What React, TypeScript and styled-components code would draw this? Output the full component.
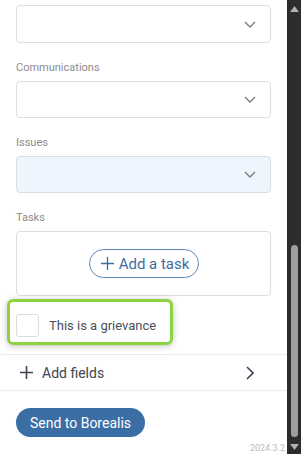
import React from "react";
import styled, { createGlobalStyle } from "styled-components";

const Global = createGlobalStyle`
  html, body { margin: 0; padding: 0; background: #fff; }
  body { font-family: Roboto, "Noto Sans", sans-serif; overflow: hidden; }
  * { box-sizing: border-box; }
`;

const Frame = styled.div`
  display: flex;
  width: 301px;
  height: 454px;
  overflow: hidden;
`;

const Content = styled.div`
  width: 287px;
  height: 454px;
  display: flex;
  flex-direction: column;
  position: relative;
`;

const Form = styled.div`
  display: flex;
  flex-direction: column;
  padding: 5px 16px 0 16px;
`;

const Field = styled.div<{ $first?: boolean }>`
  display: flex;
  flex-direction: column;
  margin-top: ${(p) => (p.$first ? "0" : "18px")};
`;

const Label = styled.div`
  font-size: 11px;
  line-height: 14px;
  color: #8c8c8c;
  margin-bottom: 6px;
`;

const Select = styled.div<{ $active?: boolean; $tall?: boolean }>`
  height: ${(p) => (p.$tall ? "38px" : "37px")};
  border: 1px solid #dedede;
  border-radius: 4px;
  background: ${(p) => (p.$active ? "#eef5fe" : "#fff")};
  display: flex;
  align-items: center;
  justify-content: flex-end;
  padding-right: 14px;
`;

const TaskBox = styled.div`
  height: 65px;
  border: 1px solid #dedede;
  border-radius: 4px;
  display: flex;
  align-items: center;
  justify-content: center;
  padding-left: 1px;
`;

const PillOutline = styled.button`
  height: 29px;
  width: 110px;
  border: 1px solid #5b86b4;
  border-radius: 15px;
  background: #fff;
  color: #3d6e9f;
  font-family: Roboto, sans-serif;
  font-size: 15px;
  display: flex;
  align-items: center;
  justify-content: center;
  gap: 5px;
  padding: 0 0 0 2px;
`;

const Highlight = styled.div`
  margin: 3px 0 0 7px;
  width: 166px;
  height: 46px;
  border: 3px solid #8dd241;
  border-radius: 6px;
  box-shadow: 0 1px 6px rgba(0, 0, 0, 0.25);
  display: flex;
  align-items: flex-start;
  padding: 12px 0 0 6px;
  gap: 10px;
`;

const Check = styled.div`
  width: 23px;
  height: 23px;
  border: 1px solid #dcdcdc;
  border-radius: 3px;
  background: #fff;
`;

const CheckText = styled.span`
  font-size: 13px;
  line-height: 23px;
  color: #4a4f5c;
`;

const AddRow = styled.div`
  margin-top: 9px;
  height: 37px;
  border-top: 1px solid #ececec;
  border-bottom: 1px solid #ececec;
  display: flex;
  align-items: center;
  padding: 0 33px 0 20px;
  gap: 9px;
`;

const AddText = styled.span`
  flex: 1;
  font-size: 14px;
  color: #3e4452;
`;

const Footer = styled.div`
  padding: 17px 16px 0 16px;
`;

const Primary = styled.button`
  height: 29px;
  width: 129px;
  border: none;
  border-radius: 15px;
  background: #3a6ea5;
  color: #fff;
  font-family: Roboto, sans-serif;
  font-size: 14px;
  padding: 0;
`;

const Version = styled.div`
  position: absolute;
  right: 2px;
  bottom: 1px;
  font-size: 9px;
  color: #bdbdbd;
`;

const Scrollbar = styled.div`
  width: 14px;
  height: 454px;
  background: #2c2c2c;
  display: flex;
  flex-direction: column;
  align-items: center;
  padding: 6px 0 4px 0;
`;

const Track = styled.div`
  flex: 1;
  width: 100%;
  display: flex;
  flex-direction: column;
  justify-content: flex-end;
  align-items: center;
  padding: 4px 0 7px 0;
`;

const Thumb = styled.div`
  width: 7px;
  height: 192px;
  border-radius: 4px;
  background: #9e9e9e;
`;

const ChevronDown = () => (
  <svg width="12" height="7" viewBox="0 0 12 7">
    <path d="M1 1 L6 6 L11 1" fill="none" stroke="#7a7a7a" strokeWidth="1.3" />
  </svg>
);

const ChevronRight = () => (
  <svg width="8" height="14" viewBox="0 0 8 14">
    <path d="M1 1 L7 7 L1 13" fill="none" stroke="#3e4452" strokeWidth="1.6" />
  </svg>
);

const Plus = ({ size, color, w }: { size: number; color: string; w: number }) => (
  <svg width={size} height={size} viewBox={`0 0 ${size} ${size}`}>
    <path
      d={`M${size / 2} 0 V${size} M0 ${size / 2} H${size}`}
      stroke={color}
      strokeWidth={w}
    />
  </svg>
);

const Tri = ({ down }: { down?: boolean }) => (
  <svg width="9" height="6" viewBox="0 0 9 6">
    <path d={down ? "M0 0 H9 L4.5 6 Z" : "M0 6 H9 L4.5 0 Z"} fill="#b0b0b0" />
  </svg>
);

export default function App() {
  return (
    <>
      <Global />
      <Frame>
        <Content>
          <Form>
            <Field $first>
              <Select $tall>
                <ChevronDown />
              </Select>
            </Field>
            <Field>
              <Label>Communications</Label>
              <Select>
                <ChevronDown />
              </Select>
            </Field>
            <Field>
              <Label>Issues</Label>
              <Select $active>
                <ChevronDown />
              </Select>
            </Field>
            <Field>
              <Label>Tasks</Label>
              <TaskBox>
                <PillOutline>
                  <Plus size={13} color="#3d6e9f" w={1.3} />
                  Add a task
                </PillOutline>
              </TaskBox>
            </Field>
          </Form>
          <Highlight>
            <Check />
            <CheckText>This is a grievance</CheckText>
          </Highlight>
          <AddRow>
            <Plus size={13} color="#3e4452" w={1.6} />
            <AddText>Add fields</AddText>
            <ChevronRight />
          </AddRow>
          <Footer>
            <Primary>Send to Borealis</Primary>
          </Footer>
          <Version>2024.3.2</Version>
        </Content>
        <Scrollbar>
          <Tri />
          <Track>
            <Thumb />
          </Track>
          <Tri down />
        </Scrollbar>
      </Frame>
    </>
  );
}
